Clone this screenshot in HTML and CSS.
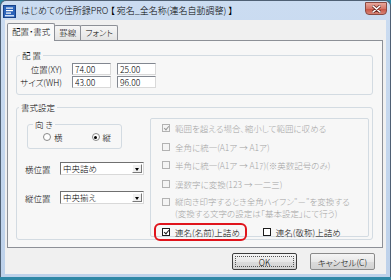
FILE: index.html
```html
<!DOCTYPE html>
<html lang="ja">
<head>
    <meta charset="UTF-8">
    <title>宛名_全名称(連名自動調整)</title>
    <link rel="stylesheet" href="styles.css">
</head>
<body>
    <div class="window">
        <div class="titlebar">
            <svg class="app-icon" width="13" height="13" viewBox="0 0 13 13">
                <rect x="0.5" y="0.5" width="12" height="12" fill="#2b63b9" stroke="#17428a"/>
                <rect x="3" y="2.5" width="7" height="1.2" fill="#fff"/>
                <rect x="3" y="5" width="7" height="1.2" fill="#fff"/>
                <rect x="3" y="7.5" width="5" height="1.2" fill="#fff"/>
                <rect x="2" y="10" width="9" height="1.5" fill="#cfe0f7"/>
            </svg>
            <span class="title">はじめての住所録PRO 【 宛名_全名称(連名自動調整) 】</span>
            <div class="close">
                <svg width="9" height="8" viewBox="0 0 9 8">
                    <path d="M1 1 L8 7 M8 1 L1 7" stroke="#6b2b24" stroke-width="3" stroke-linecap="round"/>
                    <path d="M1 1 L8 7 M8 1 L1 7" stroke="#fff" stroke-width="1.6" stroke-linecap="round"/>
                </svg>
            </div>
        </div>

        <div class="client">
            <div class="tabs">
                <div class="tab active">配置・書式</div>
                <div class="tab">罫線</div>
                <div class="tab">フォント</div>
            </div>

            <div class="panel">
                <fieldset class="group g-place">
                    <legend>配 置</legend>
                    <div class="field-row">
                        <span class="field-label">位置(XY)</span>
                        <input class="num" type="text" value="74.00">
                        <input class="num" type="text" value="25.00">
                    </div>
                    <div class="field-row">
                        <span class="field-label">サイズ(WH)</span>
                        <input class="num" type="text" value="43.00">
                        <input class="num" type="text" value="96.00">
                    </div>
                </fieldset>

                <fieldset class="group g-format">
                    <legend>書式設定</legend>
                    <div class="format-body">
                        <div class="left-col">
                            <fieldset class="group g-dir">
                                <legend>向 き</legend>
                                <div class="radios">
                                    <span class="radio"></span><span class="radio-text">横</span>
                                    <span class="radio checked"></span><span class="radio-text">縦</span>
                                </div>
                            </fieldset>
                            <div class="select-row first">
                                <span class="select-label">横位置</span>
                                <div class="select">中央詰め<span class="drop"></span></div>
                            </div>
                            <div class="select-row">
                                <span class="select-label">縦位置</span>
                                <div class="select">中央揃え<span class="drop"></span></div>
                            </div>
                        </div>

                        <div class="opts">
                            <div class="opt disabled"><span class="check checked"></span>範囲を超える場合、縮小して範囲に収める</div>
                            <div class="opt disabled"><span class="check"></span>全角に統一(A1ア → A1ア)</div>
                            <div class="opt disabled"><span class="check"></span>半角に統一(A1ア → A1ｱ)(※英数記号のみ)</div>
                            <div class="opt disabled"><span class="check"></span>漢数字に変換(123 → 一二三)</div>
                            <div class="opt disabled two-line"><span class="check"></span>縦向き印字するとき全角ハイフン"－"を変換する<br>(変換する文字の設定は「基本設定」にて行う)</div>
                            <div class="opt last">
                                <span class="marked"><span class="check checked"></span>連名(名前)上詰め</span>
                                <span class="plain"><span class="check"></span>連名(敬称)上詰め</span>
                            </div>
                        </div>
                    </div>
                </fieldset>
            </div>

            <div class="buttons">
                <button class="btn default"><span class="focus">OK</span></button>
                <button class="btn">キャンセル(C)</button>
            </div>
        </div>
    </div>
</body>
</html>
```

FILE: styles.css
```css
* {
    box-sizing: border-box;
}
body {
    margin: 0;
    width: 391px;
    height: 280px;
    overflow: hidden;
    font-family: "Noto Sans CJK JP", "Noto Sans", sans-serif;
    font-size: 8.5px;
    font-weight: 300;
    font-feature-settings: "palt";
    color: #000;
    background: #2f88a6;
}
.window {
    height: 277px;
    background: linear-gradient(#cbdcf1, #bdd1ea);
    border: 1px solid #4f6074;
    border-bottom: none;
    border-radius: 6px 6px 0 0;
    padding: 0 4px 3px;
    display: flex;
    flex-direction: column;
}
.titlebar {
    height: 19px;
    margin: 0 -4px;
    padding-left: 2px;
    display: flex;
    align-items: center;
}
.app-icon {
    margin-right: 5px;
    margin-top: 1px;
}
.title {
    font-size: 9px;
    line-height: 12px;
    white-space: nowrap;
}
.close {
    margin-left: auto;
    margin-right: 3px;
    align-self: flex-start;
    margin-top: 1px;
    width: 22px;
    height: 13px;
    border: 1px solid #8a4a42;
    border-radius: 0 0 4px 4px;
    background: linear-gradient(#e8a79b, #d6776a 50%, #c7503f 51%, #d78476);
    display: flex;
    align-items: center;
    justify-content: center;
}
.client {
    height: 254px;
    background: #f0f0f0;
    padding: 3px 3px 0 2px;
}

/* tabs */
.tabs {
    display: flex;
    align-items: flex-end;
    height: 17px;
    margin-left: 1px;
    position: relative;
    z-index: 1;
}
.tab {
    height: 15px;
    line-height: 13px;
    padding: 0 4px;
    border: 1px solid #8d9097;
    border-bottom: none;
    border-radius: 2px 2px 0 0;
    background: linear-gradient(#f6f6f6, #e4e4e4);
    margin-left: -1px;
}
.tab.active {
    height: 18px;
    line-height: 15px;
    margin-bottom: -1px;
    background: #f9f9f9;
    padding: 0 4px;
}
.panel {
    height: 208px;
    border: 1px solid #8d9097;
    background: #f7f7f7;
    padding: 9px 9px 0 8px;
}

/* group boxes */
.group {
    margin: 0;
    padding: 0;
    border: 1px solid #d3dbe2;
    border-radius: 3px;
    min-width: 0;
}
.group legend {
    padding: 0 2px;
    margin-left: 2px;
    line-height: 10px;
    height: 10px;
}
.g-place {
    padding: 3px 0 6px;
}
.g-place legend {
    margin-left: 3px;
}
.field-row {
    display: flex;
    align-items: center;
    height: 12px;
}
.field-row + .field-row {
    margin-top: 1px;
}
.field-label {
    width: 45px;
    text-align: right;
    margin-right: 10px;
}
.num {
    width: 39px;
    height: 12px;
    margin: 0 6px 0 0;
    padding: 0 2px;
    font: inherit;
    line-height: 10px;
    border: 1px solid;
    border-color: #828790 #d9d9d9 #d9d9d9 #828790;
    background: #fff;
    color: #000;
}
.g-format {
    margin-top: 7px;
    padding-bottom: 2px;
}
.format-body {
    display: flex;
    padding-top: 6px;
}
.left-col {
    width: 124px;
    margin-left: 9px;
}
.g-dir {
    width: 95px;
    margin: 1px 0 0 1px;
}
.g-dir legend {
    margin-left: 5px;
}
.radios {
    display: flex;
    align-items: center;
    height: 12px;
    margin: 2px 0 5px 15px;
}
.radio {
    flex: none;
    width: 8px;
    height: 8px;
    border-radius: 50%;
    border: 1px solid #8a8a8a;
    background: #fff;
    margin-right: 3px;
    position: relative;
}
.radio-text {
    margin-right: 29px;
}
.radio.checked::after {
    content: "";
    position: absolute;
    left: 1.5px;
    top: 1.5px;
    width: 3px;
    height: 3px;
    border-radius: 50%;
    background: #000;
}
.select-row {
    display: flex;
    align-items: center;
    margin-top: 16px;
}
.select-row.first {
    margin-top: 13px;
}
.select-label {
    width: 35px;
    margin-left: -1px;
}
.select {
    width: 84px;
    height: 13px;
    line-height: 11px;
    padding-left: 2px;
    background: #fff;
    border: 1px solid;
    border-color: #707070 #d9d9d9 #d9d9d9 #707070;
    display: flex;
    align-items: center;
}
.drop {
    margin-left: auto;
    margin-right: 1px;
    width: 10px;
    height: 9px;
    background: #f0f0f0;
    border: 1px solid;
    border-color: #fff #7a7a7a #7a7a7a #fff;
    position: relative;
}
.drop::after {
    content: "";
    position: absolute;
    left: 2px;
    top: 2.5px;
    border-left: 2.5px solid transparent;
    border-right: 2.5px solid transparent;
    border-top: 3px solid #000;
}

/* options */
.opts {
    width: 219px;
    height: 119px;
    border: 1px solid #d3dbe2;
    border-radius: 2px;
    padding: 3px 0 0 11px;
}
.opt {
    display: flex;
    align-items: center;
    height: 12px;
    line-height: 12px;
    margin-bottom: 6.5px;
    white-space: nowrap;
}
.opt.disabled {
    color: #a3a3a3;
}
.opt.two-line {
    height: 24px;
    line-height: 11.5px;
    align-items: flex-start;
    margin-bottom: 3px;
}
.opt.two-line .check {
    margin-top: 2px;
}
.check {
    flex: none;
    width: 8px;
    height: 8px;
    border: 1px solid #1c1c1c;
    background: #fff;
    margin-right: 5px;
    position: relative;
}
.disabled .check {
    border-color: #b2b2b2;
    background: #f4f4f4;
}
.check.checked::after {
    content: "";
    position: absolute;
    left: 1.5px;
    top: 0;
    width: 2px;
    height: 4px;
    border: solid #222;
    border-width: 0 1.5px 1.5px 0;
    transform: rotate(40deg);
}
.disabled .check.checked::after {
    border-color: #9a9a9a;
}
.opt.last {
    height: 18px;
    margin-left: -8px;
}
.marked {
    display: flex;
    align-items: center;
    height: 18px;
    padding: 0 5px 0 6px;
    border: 2px solid #e0141c;
    border-radius: 6px;
}
.plain {
    display: flex;
    align-items: center;
    margin-left: 16px;
}

/* buttons */
.buttons {
    display: flex;
    justify-content: flex-end;
    gap: 13px;
    margin-top: 5px;
    padding-right: 8px;
}
.btn {
    width: 65px;
    height: 17px;
    padding: 0;
    font: inherit;
    color: #000;
    border: 1px solid #8a8a8a;
    border-radius: 2px;
    background: linear-gradient(#f5f5f5, #e8e8e8 50%, #dcdcdc 51%, #d2d2d2);
}
.btn.default {
    border-color: #3d3d3d;
    padding: 2px;
}
.focus {
    display: flex;
    align-items: center;
    justify-content: center;
    height: 100%;
    border: 1px dotted #555;
}
```
